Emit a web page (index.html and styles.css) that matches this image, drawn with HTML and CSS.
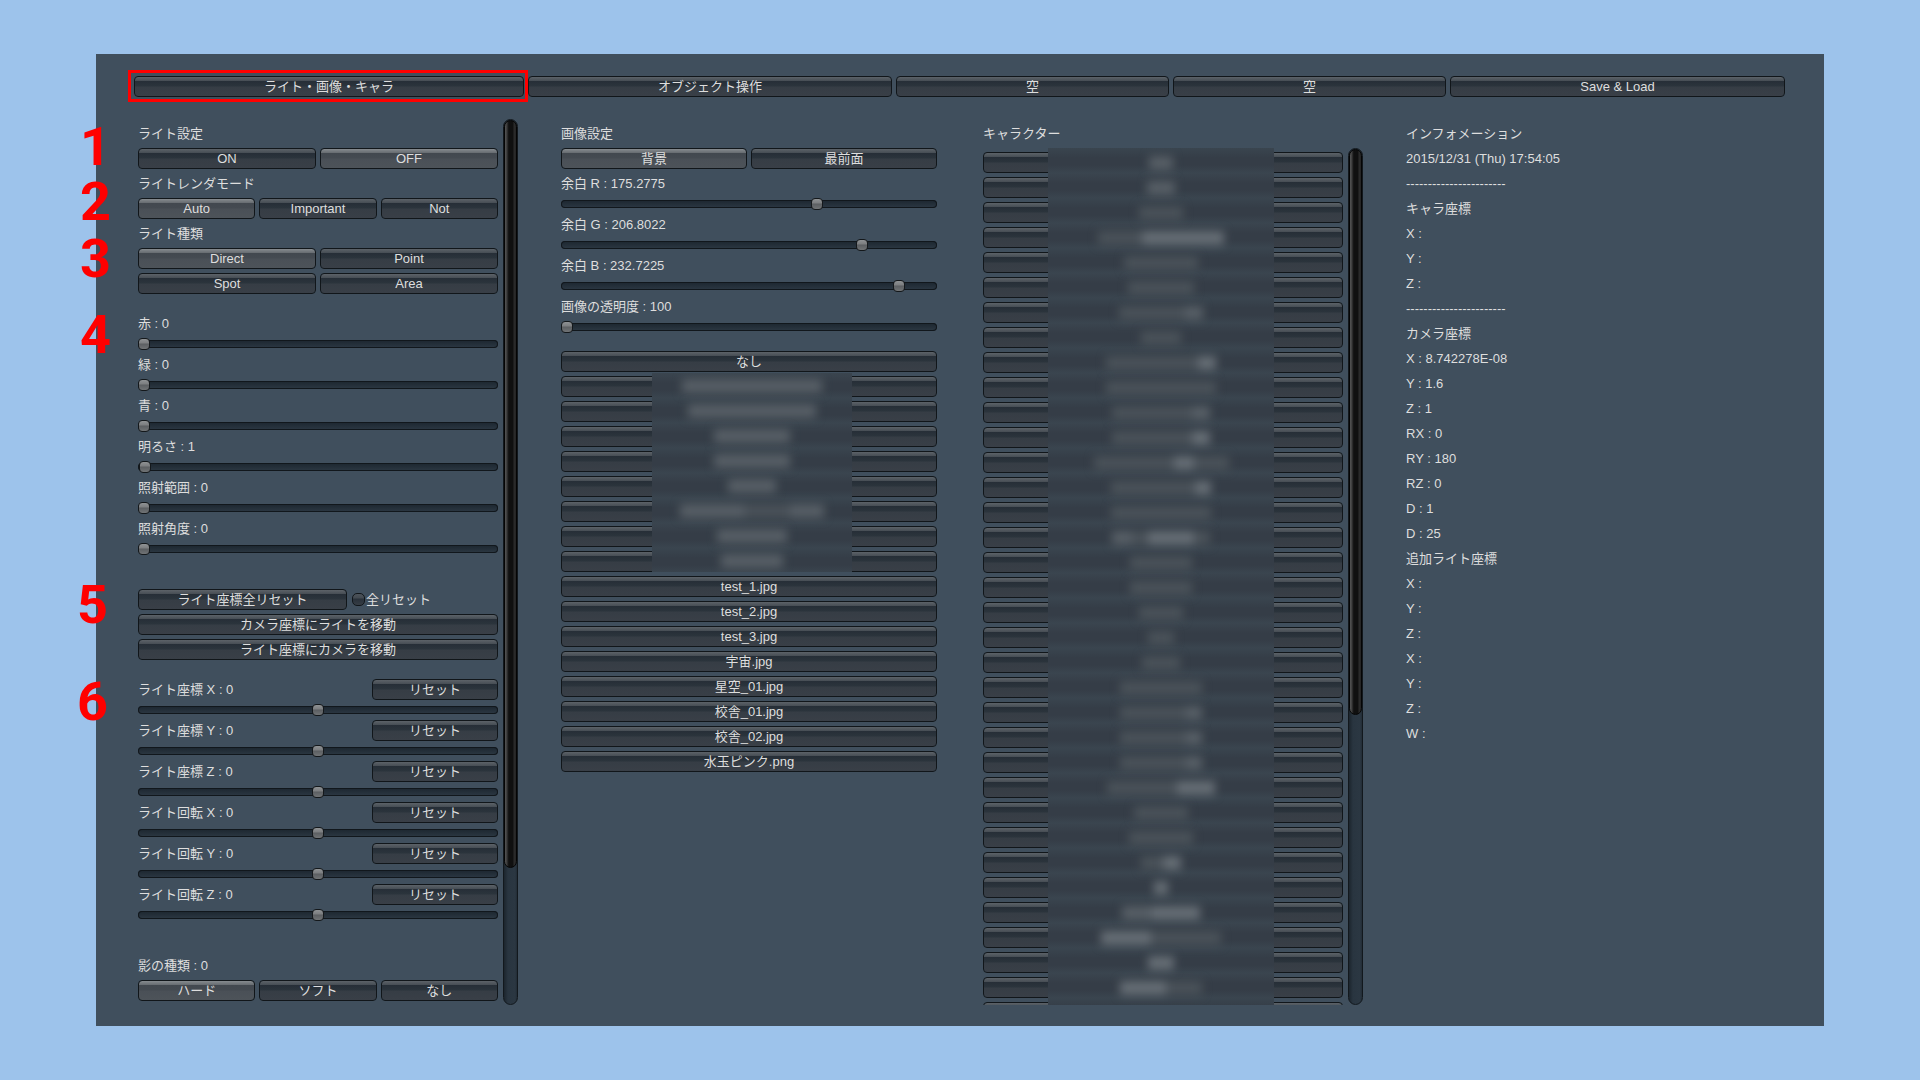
FILE: index.html
```html
<!DOCTYPE html>
<html lang="ja">
<head>
<meta charset="utf-8">
<title>ライト・画像・キャラ</title>
<link rel="stylesheet" href="styles.css">
</head>
<body>
<main class="panel">
  <nav class="tabs">
    <div class="tab-current"><button class="btn">ライト・画像・キャラ</button></div>
    <button class="btn">オブジェクト操作</button>
    <button class="btn">空</button>
    <button class="btn">空</button>
    <button class="btn">Save &amp; Load</button>
  </nav>

  <div class="columns">
    <section class="scroll-area">
      <div class="stack">
        <h2 class="line">ライト設定</h2>
        <div class="row"><button class="btn">ON</button><button class="btn on">OFF</button></div>
        <h2 class="line">ライトレンダモード</h2>
        <div class="row"><button class="btn on">Auto</button><button class="btn">Important</button><button class="btn">Not</button></div>
        <h2 class="line">ライト種類</h2>
        <div class="row"><button class="btn on">Direct</button><button class="btn">Point</button></div>
        <div class="row"><button class="btn">Spot</button><button class="btn">Area</button></div>

        <div class="stack group-colour">
          <label class="line" for="red">赤 : 0</label>
          <input class="slider" id="red" type="range" min="0" max="255" value="0">
          <label class="line" for="green">緑 : 0</label>
          <input class="slider" id="green" type="range" min="0" max="255" value="0">
          <label class="line" for="blue">青 : 0</label>
          <input class="slider" id="blue" type="range" min="0" max="255" value="0">
          <label class="line" for="bright">明るさ : 1</label>
          <input class="slider" id="bright" type="range" min="0" max="300" value="1">
          <label class="line" for="range">照射範囲 : 0</label>
          <input class="slider" id="range" type="range" min="0" max="255" value="0">
          <label class="line" for="angle">照射角度 : 0</label>
          <input class="slider" id="angle" type="range" min="0" max="180" value="0">
        </div>

        <div class="stack group-wide">
          <div class="row-reset-all">
            <button class="btn">ライト座標全リセット</button>
            <label class="check"><input type="checkbox">全リセット</label>
          </div>
          <button class="btn">カメラ座標にライトを移動</button>
          <button class="btn">ライト座標にカメラを移動</button>
        </div>

        <div class="stack group-colour">
          <div class="row-value"><label class="line" for="px">ライト座標 X : 0</label><button class="btn">リセット</button></div>
          <input class="slider" id="px" type="range" min="-100" max="100" value="0">
          <div class="row-value"><label class="line" for="py">ライト座標 Y : 0</label><button class="btn">リセット</button></div>
          <input class="slider" id="py" type="range" min="-100" max="100" value="0">
          <div class="row-value"><label class="line" for="pz">ライト座標 Z : 0</label><button class="btn">リセット</button></div>
          <input class="slider" id="pz" type="range" min="-100" max="100" value="0">
          <div class="row-value"><label class="line" for="rx">ライト回転 X : 0</label><button class="btn">リセット</button></div>
          <input class="slider" id="rx" type="range" min="-100" max="100" value="0">
          <div class="row-value"><label class="line" for="ry">ライト回転 Y : 0</label><button class="btn">リセット</button></div>
          <input class="slider" id="ry" type="range" min="-100" max="100" value="0">
          <div class="row-value"><label class="line" for="rz">ライト回転 Z : 0</label><button class="btn">リセット</button></div>
          <input class="slider" id="rz" type="range" min="-100" max="100" value="0">
        </div>

        <div class="stack group-wide">
          <h2 class="line">影の種類 : 0</h2>
          <div class="row"><button class="btn on">ハード</button><button class="btn">ソフト</button><button class="btn">なし</button></div>
        </div>
      </div>
      <div class="scrollbar"><div class="thumb" style="height:84.6%"></div></div>
    </section>

    <section class="stack column-image">
      <h2 class="line">画像設定</h2>
      <div class="row"><button class="btn on">背景</button><button class="btn">最前面</button></div>
      <label class="line" for="mr">余白 R : 175.2775</label>
      <input class="slider" id="mr" type="range" min="0" max="255" step="any" value="175.2775">
      <label class="line" for="mg">余白 G : 206.8022</label>
      <input class="slider" id="mg" type="range" min="0" max="255" step="any" value="206.8022">
      <label class="line" for="mb">余白 B : 232.7225</label>
      <input class="slider" id="mb" type="range" min="0" max="255" step="any" value="232.7225">
      <label class="line" for="alpha">画像の透明度 : 100</label>
      <input class="slider" id="alpha" type="range" min="0" max="100" value="0">

      <div class="stack group-files">
        <button class="btn">なし</button>
        <div class="stack masked">
          <button class="btn"></button><button class="btn"></button><button class="btn"></button><button class="btn"></button>
          <button class="btn"></button><button class="btn"></button><button class="btn"></button><button class="btn"></button>
          <div class="mask mask-image">
            <p><i class="mid" style="width:140px"></i></p>
            <p><i class="mid" style="width:128px"></i></p>
            <p><i class="mid" style="width:76px"></i></p>
            <p><i class="mid" style="width:76px"></i></p>
            <p><i class="mid" style="width:48px"></i></p>
            <p><i class="mid" style="width:64px"></i><i style="width:46px"></i><i class="mid" style="width:34px"></i></p>
            <p><i class="mid" style="width:70px"></i></p>
            <p><i class="mid" style="width:62px"></i></p>
          </div>
        </div>
        <button class="btn">test_1.jpg</button>
        <button class="btn">test_2.jpg</button>
        <button class="btn">test_3.jpg</button>
        <button class="btn">宇宙.jpg</button>
        <button class="btn">星空_01.jpg</button>
        <button class="btn">校舎_01.jpg</button>
        <button class="btn">校舎_02.jpg</button>
        <button class="btn">水玉ピンク.png</button>
      </div>
    </section>

    <section class="column-character">
      <h2 class="line">キャラクター</h2>
      <div class="scroll-area">
        <div class="character-view">
          <div class="stack">
            <button class="btn"></button><button class="btn"></button><button class="btn"></button><button class="btn"></button><button class="btn"></button>
            <button class="btn"></button><button class="btn"></button><button class="btn"></button><button class="btn"></button><button class="btn"></button>
            <button class="btn"></button><button class="btn"></button><button class="btn"></button><button class="btn"></button><button class="btn"></button>
            <button class="btn"></button><button class="btn"></button><button class="btn"></button><button class="btn"></button><button class="btn"></button>
            <button class="btn"></button><button class="btn"></button><button class="btn"></button><button class="btn"></button><button class="btn"></button>
            <button class="btn"></button><button class="btn"></button><button class="btn"></button><button class="btn"></button><button class="btn"></button>
            <button class="btn"></button><button class="btn"></button><button class="btn"></button><button class="btn"></button><button class="btn"></button>
          </div>
          <div class="mask mask-character">
            <p><i class="mid" style="width:24px"></i></p>
            <p><i class="mid" style="width:28px"></i></p>
            <p><i style="width:44px"></i></p>
            <p><i style="width:44px"></i><i class="high" style="width:82px"></i></p>
            <p><i style="width:74px"></i></p>
            <p><i style="width:66px"></i></p>
            <p><i style="width:66px"></i><i class="mid" style="width:18px"></i></p>
            <p><i style="width:40px"></i></p>
            <p><i style="width:92px"></i><i class="high" style="width:18px"></i></p>
            <p><i style="width:110px"></i></p>
            <p><i style="width:80px"></i><i class="mid" style="width:18px"></i></p>
            <p><i style="width:80px"></i><i class="high" style="width:18px"></i></p>
            <p><i style="width:80px"></i><i class="high" style="width:20px"></i><i style="width:35px"></i></p>
            <p><i style="width:84px"></i><i class="high" style="width:16px"></i></p>
            <p><i style="width:100px"></i></p>
            <p><i class="mid" style="width:20px"></i><i style="width:16px"></i><i class="high" style="width:46px"></i><i style="width:16px"></i></p>
            <p><i style="width:62px"></i></p>
            <p><i style="width:62px"></i></p>
            <p><i style="width:44px"></i></p>
            <p><i style="width:26px"></i></p>
            <p><i style="width:38px"></i></p>
            <p><i style="width:82px"></i></p>
            <p><i style="width:66px"></i><i class="mid" style="width:16px"></i></p>
            <p><i style="width:66px"></i><i class="mid" style="width:16px"></i></p>
            <p><i style="width:66px"></i><i class="mid" style="width:16px"></i></p>
            <p><i style="width:70px"></i><i class="high" style="width:38px"></i></p>
            <p><i style="width:54px"></i></p>
            <p><i style="width:64px"></i></p>
            <p><i style="width:22px"></i><i class="high" style="width:18px"></i></p>
            <p><i class="high" style="width:14px"></i></p>
            <p><i class="mid" style="width:30px"></i><i class="high" style="width:48px"></i></p>
            <p><i class="high" style="width:50px"></i><i style="width:70px"></i></p>
            <p><i class="high" style="width:26px"></i></p>
            <p><i class="high" style="width:46px"></i><i style="width:36px"></i></p>
          </div>
        </div>
        <div class="scrollbar"><div class="thumb" style="height:66.2%"></div></div>
      </div>
    </section>

    <section class="stack column-info">
      <h2 class="line">インフォメーション</h2>
      <p class="line">2015/12/31 (Thu) 17:54:05</p>
      <p class="line">-----------------------</p>
      <p class="line">キャラ座標</p>
      <p class="line">X :</p>
      <p class="line">Y :</p>
      <p class="line">Z :</p>
      <p class="line">-----------------------</p>
      <p class="line">カメラ座標</p>
      <p class="line">X : 8.742278E-08</p>
      <p class="line">Y : 1.6</p>
      <p class="line">Z : 1</p>
      <p class="line">RX : 0</p>
      <p class="line">RY : 180</p>
      <p class="line">RZ : 0</p>
      <p class="line">D : 1</p>
      <p class="line">D : 25</p>
      <p class="line">追加ライト座標</p>
      <p class="line">X :</p>
      <p class="line">Y :</p>
      <p class="line">Z :</p>
      <p class="line">X :</p>
      <p class="line">Y :</p>
      <p class="line">Z :</p>
      <p class="line">W :</p>
    </section>
  </div>

  <span class="callout callout-1">1</span>
  <span class="callout callout-2">2</span>
  <span class="callout callout-3">3</span>
  <span class="callout callout-4">4</span>
  <span class="callout callout-5">5</span>
  <span class="callout callout-6">6</span>
</main>
</body>
</html>
```
FILE: styles.css
```css
* {
  box-sizing: border-box;
}

body {
  margin: 0;
  padding: 5vh 5vw;
  background: #9dc3eb;
  color: #dedede;
  font: 13px/21px "Liberation Sans", "Noto Sans CJK JP", sans-serif;
}

h2,
p {
  margin: 0;
  font-size: 13px;
  font-weight: 400;
}

.panel {
  position: relative;
  display: flex;
  flex-direction: column;
  gap: 22px;
  height: 90vh;
  padding: 22px 38px 21px;
  background: #404f5d;
}

/* Buttons */

.btn {
  display: block;
  width: 100%;
  height: 21px;
  flex: none;
  padding: 0;
  border: 1px solid #11161a;
  border-radius: 4px;
  background: linear-gradient(#5c6268 0, #464d54 4px, #262e37 4px, #2b343c 9px, #363d45 10px, #393f47 100%) padding-box;
  color: inherit;
  font: inherit;
  line-height: 19px;
  white-space: nowrap;
}

.btn.on {
  background: linear-gradient(#868b8f 0, #666b70 4px, #42484f 4px, #444a51 9px, #4a5057 10px, #4d5359 100%) padding-box;
}

/* Tabs */

.tabs {
  display: grid;
  grid-template-columns: 390fr 364fr 273fr 273fr 335fr;
  gap: 4px;
  padding-right: 1px;
}

.tab-current {
  position: relative;
}

.tab-current::after {
  content: "";
  position: absolute;
  inset: -6px -4px -5px -6px;
  z-index: 1;
  border: 3px solid #ff0000;
  pointer-events: none;
}

/* Columns */

.columns {
  display: grid;
  flex: 1;
  grid-template-columns: 380fr 379fr 380fr 380fr;
  grid-template-rows: minmax(0, 1fr);
  gap: 43px;
  min-height: 0;
  padding-left: 4px;
}

.stack {
  display: flex;
  flex-direction: column;
  gap: 4px;
  min-width: 0;
}

.line {
  height: 21px;
  flex: none;
  white-space: nowrap;
}

.row {
  display: flex;
  gap: 4px;
}

.row .btn {
  flex: 1 1 0;
  min-width: 0;
}

.row-value {
  display: grid;
  grid-template-columns: 65fr 35fr;
}

.row-reset-all {
  display: grid;
  grid-template-columns: 209fr 146fr;
  gap: 5px;
}

.group-colour {
  padding-top: 15px;
}

.group-files {
  padding-top: 14px;
}

.group-wide {
  padding-top: 30px;
}

.scroll-area {
  display: grid;
  grid-template-columns: 1fr 15px;
  gap: 5px;
  min-height: 0;
}

.scroll-area > .stack {
  padding-top: 4px;
}

.column-image {
  padding: 4px 3px 0 0;
}

.column-info {
  padding-top: 4px;
}

.column-character {
  display: flex;
  flex-direction: column;
  gap: 4px;
  padding-top: 4px;
}

.column-character .scroll-area {
  flex: 1;
}

.character-view {
  position: relative;
  overflow: hidden;
  padding-top: 4px;
}

/* Scrollbars */

.scrollbar {
  border: 1px solid #12181d;
  border-radius: 8px;
  background: linear-gradient(90deg, #1c252d, #293540 4px, #2b3742 11px, #222c35);
}

.thumb {
  border: 1px solid #050505;
  border-radius: 7px;
  background: linear-gradient(90deg, #555 0, #3a3a3a 2px, #1c1c1c 3px, #101010 4px, #101010 8px, #2c2c2c 9px, #242424 100%);
}

/* Sliders and check box */

.slider {
  appearance: none;
  display: block;
  width: 100%;
  height: 12px;
  flex: none;
  margin: 0;
  background: none;
}

.slider::-webkit-slider-runnable-track {
  height: 8px;
  border-radius: 4px;
  background: linear-gradient(#1c262f, #2c3843);
  box-shadow: inset 0 0 0 1px #11171c;
}

.slider::-webkit-slider-thumb {
  appearance: none;
  width: 12px;
  height: 12px;
  margin-top: -2px;
  border: 1px solid #14181b;
  border-radius: 4px;
  background: linear-gradient(#8f9294 0, #7c7e80 4px, #5c5f62 5px, #707375 100%);
}

.check {
  display: flex;
  align-items: center;
  gap: 1px;
  white-space: nowrap;
}

.check input {
  appearance: none;
  width: 13px;
  height: 13px;
  margin: 0;
  border: 1px solid #11161a;
  border-radius: 5px;
  background: linear-gradient(#4d545b 0, #434a51 4px, #29313a 5px, #363d45 100%);
}

/* Frosted areas over the private names */

.masked {
  position: relative;
}

.mask {
  position: absolute;
  overflow: hidden;
  background: repeating-linear-gradient(#3a454f 0, #353d47 10px, #353d47 17px, #3a454f 25px);
}

.mask p {
  display: flex;
  justify-content: center;
  align-items: center;
  height: 25px;
  filter: blur(5px);
}

.mask i {
  height: 14px;
  background: #4a5259;
}

.mask .mid {
  background: #575f66;
}

.mask .high {
  background: #666e75;
}

.mask-image {
  top: -3px;
  bottom: 0;
  left: 91px;
  width: 200px;
}

.mask-character {
  inset: 0 69px 0 65px;
  padding-top: 2px;
}

/* Numbered callouts */

.callout {
  position: absolute;
  left: -16px;
  width: 30px;
  color: #ff0000;
  font: 700 54px/54px Roboto, "Liberation Sans", sans-serif;
  text-align: center;
}

.callout-1 {
  top: 66px;
}

.callout-2 {
  top: 121px;
}

.callout-3 {
  top: 178px;
}

.callout-4 {
  top: 254px;
}

.callout-5 {
  top: 524px;
  left: -19px;
}

.callout-6 {
  top: 621px;
  left: -19px;
}
```
